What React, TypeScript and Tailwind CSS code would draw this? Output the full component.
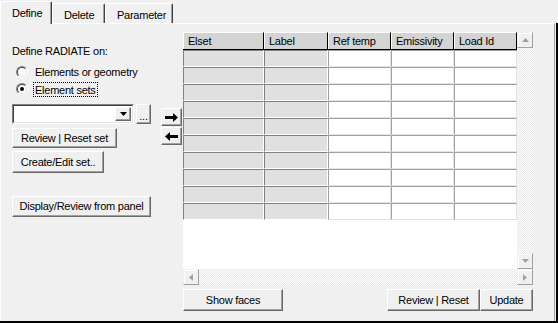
import React from 'react';

const font = "font-['Liberation_Sans',Arial,sans-serif] text-[11px] tracking-[-0.25px] text-black";
const raised =
  'bg-[#f0f0f0] border border-t-white border-l-white border-r-[#696969] border-b-[#696969] shadow-[inset_-1px_-1px_0_#a0a0a0]';
const scrollBtn =
  'bg-[#f0f0f0] border border-t-[#f0f0f0] border-l-[#f0f0f0] border-r-[#a0a0a0] border-b-[#a0a0a0] shadow-[inset_1px_1px_0_#ffffff] flex items-center justify-center';
const checker = 'bg-[repeating-conic-gradient(#e6e6e6_0%_25%,#ffffff_0%_50%)] bg-[length:2px_2px]';

const columns = [
  { label: 'Elset', w: 'w-[81px]', gray: true },
  { label: 'Label', w: 'w-[64px]', gray: true },
  { label: 'Ref temp', w: 'w-[63px]', gray: false },
  { label: 'Emissivity', w: 'w-[63px]', gray: false },
  { label: 'Load Id', w: 'w-[63px]', gray: false },
];

function Tab({ label, active, w }: { label: string; active?: boolean; w: string }) {
  if (active) {
    return (
      <div
        className={`${w} h-[23px] relative z-10 -mb-px pl-[11px] pt-[3px] bg-[#f0f0f0] border-l border-t border-r border-l-white border-t-white border-r-[#404040] rounded-t-[2px] shadow-[inset_-1px_0_0_#a0a0a0]`}
      >
        {label}
      </div>
    );
  }
  return (
    <div
      className={`${w} h-[20px] pl-[11px] pt-[3px] bg-[#f0f0f0] border-l border-t border-r border-l-white border-t-white border-r-[#404040] rounded-t-[2px] shadow-[inset_-1px_0_0_#a0a0a0]`}
    >
      {label}
    </div>
  );
}

function Btn({ children, className }: { children: React.ReactNode; className: string }) {
  return <div className={`${raised} flex items-center justify-center ${className}`}>{children}</div>;
}

function Radio({ checked }: { checked?: boolean }) {
  return (
    <div className="w-[12px] h-[12px] rounded-full border border-t-[#808080] border-l-[#808080] border-r-white border-b-white flex items-center justify-center">
      <div className="w-[10px] h-[10px] rounded-full bg-white border border-t-[#404040] border-l-[#404040] border-r-[#e0e0e0] border-b-[#e0e0e0] flex items-center justify-center">
        {checked && <div className="w-[4px] h-[4px] rounded-full bg-black" />}
      </div>
    </div>
  );
}

function Arrow({ dir }: { dir: 'right' | 'left' }) {
  return (
    <svg width="13" height="9" viewBox="0 0 13 9">
      {dir === 'right' ? (
        <path d="M0 3h8V0l5 4.5L8 9V6H0z" fill="#000" />
      ) : (
        <path d="M13 3H5V0L0 4.5 5 9V6h8z" fill="#000" />
      )}
    </svg>
  );
}

function Tri({ dir, color = '#a0a0a0' }: { dir: 'up' | 'down' | 'left' | 'right'; color?: string }) {
  const d = {
    up: 'M0 4L3.5 0 7 4z',
    down: 'M0 0h7L3.5 4z',
    left: 'M4 0v7L0 3.5z',
    right: 'M0 0v7l4-3.5z',
  }[dir];
  const horiz = dir === 'up' || dir === 'down';
  return (
    <svg width={horiz ? 7 : 4} height={horiz ? 4 : 7} viewBox={horiz ? '0 0 7 4' : '0 0 4 7'}>
      <path d={d} fill={color} />
    </svg>
  );
}

function Grid() {
  return (
    <div className="mt-[8px] w-[350px] h-[253px] flex flex-col">
      <div className="flex flex-1">
        <div className="w-[334px] flex flex-col bg-white">
          <div className="flex h-[18px] border-b border-b-black">
            {columns.map((c) => (
              <div
                key={c.label}
                className={`${c.w} h-[17px] pl-[4px] leading-[16px] bg-[#d4d4d4] border-t border-l border-r border-t-white border-l-white border-r-black`}
              >
                {c.label}
              </div>
            ))}
          </div>
          {Array.from({ length: 10 }).map((_, r) => (
            <div key={r} className="flex h-[17px]">
              {columns.map((c) =>
                c.gray ? (
                  <div
                    key={c.label}
                    className={`${c.w} h-[17px] bg-[#e0e0e0] border border-t-[#808080] border-l-[#808080] border-r-white border-b-white`}
                  />
                ) : (
                  <div
                    key={c.label}
                    className={`${c.w} h-[17px] bg-white border border-t-[#a0a0a0] border-l-[#a0a0a0] border-r-[#e4e4e4] border-b-[#e4e4e4]`}
                  />
                ),
              )}
            </div>
          ))}
        </div>
        <div className="w-[16px] flex flex-col">
          <div className={`h-[16px] ${scrollBtn}`}>
            <Tri dir="up" />
          </div>
          <div className={`flex-1 ${checker}`} />
          <div className={`h-[16px] ${scrollBtn}`}>
            <Tri dir="down" />
          </div>
        </div>
      </div>
      <div className="h-[16px] flex">
        <div className={`w-[16px] ${scrollBtn}`}>
          <Tri dir="left" />
        </div>
        <div className={`flex-1 ${checker}`} />
        <div className={`w-[16px] ${scrollBtn}`}>
          <Tri dir="right" />
        </div>
      </div>
    </div>
  );
}

export default function App() {
  return (
    <div className={`w-[558px] h-[323px] bg-[#f0f0f0] flex flex-col ${font}`}>
      <div className="h-[23px] flex items-end shrink-0">
        <Tab label="Define" active w="w-[52px]" />
        <Tab label="Delete" w="w-[53px]" />
        <Tab label="Parameter" w="w-[68px]" />
      </div>
      <div className="flex-1 flex border-r-2 border-b-2 border-r-black border-b-black">
        <div className="flex-1 flex mr-px border-t border-l border-r border-t-white border-l-white border-r-[#a0a0a0]">
          {/* left controls */}
          <div className="w-[160px] pl-[11px] flex flex-col">
            <div className="mt-[20px] h-[14px] leading-[14px]">Define RADIATE on:</div>
            <div className="mt-[6px] h-[16px] flex items-center">
              <div className="ml-[4px]">
                <Radio />
              </div>
              <span className="ml-[7px]">Elements or geometry</span>
            </div>
            <div className="mt-px h-[16px] flex items-center">
              <div className="ml-[4px]">
                <Radio checked />
              </div>
              <span className="ml-[5px] px-px h-[15px] leading-[14px] border border-dotted border-black">Element sets</span>
            </div>
            <div className="mt-[7px] flex">
              <div className="w-[122px] h-[20px] bg-white border border-t-[#808080] border-l-[#808080] border-r-white border-b-white">
                <div className="h-full border border-t-[#404040] border-l-[#404040] border-r-[#e0e0e0] border-b-[#e0e0e0] flex justify-end p-px">
                  <div className={`w-[16px] ${raised} flex items-center justify-center`}>
                    <Tri dir="down" color="#000" />
                  </div>
                </div>
              </div>
              <div className={`ml-[2px] w-[15px] h-[20px] ${raised} flex justify-center items-end pb-[2px] leading-[10px]`}>...</div>
            </div>
            <Btn className="mt-[4px] w-[105px] h-[20px]">Review | Reset set</Btn>
            <Btn className="mt-[3px] w-[92px] h-[22px]">Create/Edit set..</Btn>
            <Btn className="mt-[23px] w-[139px] h-[21px]">Display/Review from panel</Btn>
          </div>

          {/* transfer arrows */}
          <div className="w-[22px] pt-[84px] flex flex-col gap-px">
            <div className={`w-[21px] h-[18px] ${raised} flex items-center justify-center`}>
              <Arrow dir="right" />
            </div>
            <div className={`w-[21px] h-[18px] ${raised} flex items-center justify-center`}>
              <Arrow dir="left" />
            </div>
          </div>

          {/* table area */}
          <div className="flex flex-col">
            <Grid />
            <div className="mt-[4px] w-[350px] flex">
              <Btn className="w-[100px] h-[22px]">Show faces</Btn>
              <div className="flex-1" />
              <Btn className="w-[93px] h-[22px]">Review | Reset</Btn>
              <Btn className="w-[53px] h-[22px]">Update</Btn>
            </div>
          </div>
        </div>
      </div>
    </div>
  );
}
